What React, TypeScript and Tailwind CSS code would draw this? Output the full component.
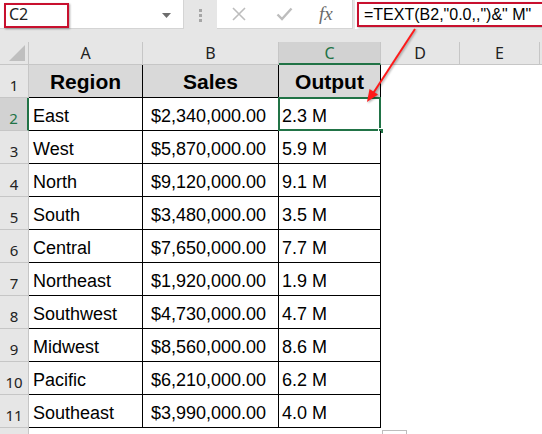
import React from 'react'

const rows = [
  ['East', '$2,340,000.00', '2.3 M'],
  ['West', '$5,870,000.00', '5.9 M'],
  ['North', '$9,120,000.00', '9.1 M'],
  ['South', '$3,480,000.00', '3.5 M'],
  ['Central', '$7,650,000.00', '7.7 M'],
  ['Northeast', '$1,920,000.00', '1.9 M'],
  ['Southwest', '$4,730,000.00', '4.7 M'],
  ['Midwest', '$8,560,000.00', '8.6 M'],
  ['Pacific', '$6,210,000.00', '6.2 M'],
  ['Southeast', '$3,990,000.00', '4.0 M'],
]

const uiFont = { fontFamily: '"Noto Sans", "Open Sans", sans-serif' }
const cellFont = { fontFamily: '"Liberation Sans", Arial, sans-serif' }

function Toolbar() {
  return (
    <div className="flex h-[30px] bg-[#e6e6e6]">
      {/* name box */}
      <div className="relative flex h-[29px] w-[184px] items-center bg-white border-r border-b border-[#d4d4d4]">
        <div className="absolute left-[4px] top-[3px] h-[25px] w-[65px] border-2 border-[#c8102e] shadow-[1px_1px_2px_rgba(0,0,0,0.35)]" />
        <span className="pl-[9px] text-[16px] text-[#222]" style={uiFont}>C2</span>
        <svg className="absolute left-[162px] top-[13px]" width="9" height="5" viewBox="0 0 9 5">
          <path d="M0 0h9L4.5 5z" fill="#6d6d6d" />
        </svg>
      </div>
      {/* grip dots */}
      <div className="flex w-[33px] flex-col items-center justify-center gap-[2px]">
        <span className="h-[3px] w-[3px] bg-[#a6a6a6]" />
        <span className="h-[3px] w-[3px] bg-[#a6a6a6]" />
        <span className="h-[3px] w-[3px] bg-[#a6a6a6]" />
      </div>
      {/* cancel / enter / fx */}
      <div className="flex h-[29px] w-[136px] items-center bg-white border-r border-b border-[#d4d4d4]">
        <svg className="ml-[14px]" width="16" height="16" viewBox="0 0 16 16">
          <path d="M2 2l12 12M14 2L2 14" stroke="#bdbdbd" strokeWidth="1.6" />
        </svg>
        <svg className="ml-[29px]" width="17" height="14" viewBox="0 0 17 14">
          <path d="M1.5 7.5l4.5 4.5L15.5 1.5" stroke="#bdbdbd" strokeWidth="2.4" fill="none" />
        </svg>
        <span
          className="ml-[26px] text-[19px] italic text-[#6a6a6a]"
          style={{ fontFamily: '"Liberation Serif", "DejaVu Serif", serif' }}
        >
          fx
        </span>
      </div>
      {/* formula bar */}
      <div className="ml-[2px] flex h-[29px] flex-1 items-center bg-white">
        <div
          className="-mr-[6px] ml-[2px] flex h-[25px] flex-1 items-center border-2 border-[#c8102e] pl-[5px] shadow-[1px_1px_2px_rgba(0,0,0,0.35)]"
        >
          <span className="whitespace-nowrap text-[16px] text-black" style={cellFont}>
            =TEXT(B2,"0.0,,")&amp;" M"
          </span>
        </div>
      </div>
    </div>
  )
}

function ColumnHeaders() {
  const cols = [
    { l: 'A', w: 'w-[114px]' },
    { l: 'B', w: 'w-[136px]' },
    { l: 'C', w: 'w-[102px]', sel: true },
    { l: 'D', w: 'w-[79px]' },
    { l: 'E', w: 'w-[80px]' },
  ]
  return (
    <div className="flex h-[23px] bg-[#e6e6e6]" style={uiFont}>
      <div className="relative h-[23px] w-[29px] shrink-0 border-r border-b border-[#c6c6c6] bg-[#e6e6e6]">
        <svg className="absolute bottom-[3px] right-[3px]" width="16" height="16" viewBox="0 0 16 16">
          <path d="M16 0V16H0z" fill="#bfbfbf" />
        </svg>
      </div>
      {cols.map((c) => (
        <div
          key={c.l}
          className={`${c.w} flex h-[23px] shrink-0 items-center justify-center border-r border-[#c6c6c6] text-[16px] ${
            c.sel
              ? 'border-b-2 border-b-[#217346] bg-[#d2d2d2] text-[#217346]'
              : 'border-b border-b-[#c6c6c6] text-[#222]'
          }`}
        >
          {c.l}
        </div>
      ))}
      <div className="flex-1 border-b border-[#c6c6c6]" />
    </div>
  )
}

function RowHeader({ n, sel }: { n: number; sel?: boolean }) {
  return (
    <div
      className={`flex h-[33px] w-[29px] shrink-0 items-end justify-center border-b border-[#c6c6c6] pb-[3px] text-[15px] leading-[18px] ${
        sel
          ? 'border-r-2 border-r-[#217346] bg-[#d2d2d2] text-[#217346]'
          : 'border-r border-r-[#c6c6c6] bg-[#e6e6e6] text-[#222]'
      }`}
      style={uiFont}
    >
      {n}
    </div>
  )
}

function TitleRow() {
  const cls =
    'flex h-[33px] shrink-0 items-end justify-center border-r border-b border-black bg-[#d9d9d9] pb-[3px] text-[21px] font-bold leading-[24px] text-black'
  return (
    <div className="flex">
      <RowHeader n={1} />
      <div className={`${cls} w-[114px]`} style={cellFont}>Region</div>
      <div className={`${cls} w-[136px]`} style={cellFont}>Sales</div>
      <div className={`${cls} w-[102px]`} style={cellFont}>Output</div>
      <div className="flex-1 bg-white" />
    </div>
  )
}

function DataRow({ n, r }: { n: number; r: string[] }) {
  const cls =
    'flex h-[33px] shrink-0 items-end border-r border-b border-black bg-white pb-[4px] text-[18px] leading-[20px] text-black whitespace-nowrap'
  const selected = n === 2
  return (
    <div className="flex">
      <RowHeader n={n} sel={selected} />
      <div className={`${cls} w-[114px] pl-[4px]`} style={cellFont}>{r[0]}</div>
      <div className={`${cls} w-[136px] pl-[8px]`} style={cellFont}>{r[1]}</div>
      <div className={`${cls} relative w-[102px] pl-[3px]`} style={cellFont}>
        {r[2]}
        {selected && (
          <>
            <div className="absolute -left-px -top-px -right-px -bottom-px border-2 border-[#217346]" />
            <div className="absolute -bottom-[4px] -right-[4px] h-[6px] w-[6px] border border-white bg-[#217346]" />
          </>
        )}
      </div>
      <div className="flex-1 bg-white" />
    </div>
  )
}

function Arrow() {
  return (
    <svg
      className="pointer-events-none absolute left-0 top-0 drop-shadow-[1px_1px_1px_rgba(0,0,0,0.35)]"
      width="542"
      height="434"
      viewBox="0 0 542 434"
    >
      <line x1="415" y1="29" x2="372" y2="95" stroke="#ff1a1a" strokeWidth="2" />
      <path d="M367 102L378 94.5L369.5 89z" fill="#ff1a1a" />
    </svg>
  )
}

export default function App() {
  return (
    <div className="relative h-[434px] w-[542px] overflow-hidden bg-white">
      <Toolbar />
      <div className="h-[12px] bg-[#e6e6e6]" />
      <ColumnHeaders />
      <TitleRow />
      {rows.map((r, i) => (
        <DataRow key={r[0]} n={i + 2} r={r} />
      ))}
      <div className="flex h-[6px]">
        <div className="w-[29px] border-r border-[#c6c6c6] bg-[#e6e6e6]" />
        <div className="ml-[353px] mt-[2px] h-[10px] w-[25px] border border-[#bdbdbd] bg-white" />
      </div>
      <Arrow />
    </div>
  )
}
